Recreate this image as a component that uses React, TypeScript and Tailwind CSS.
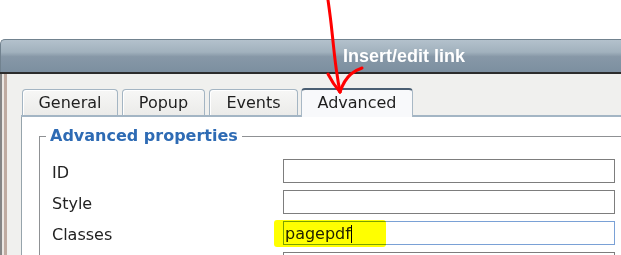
export default function App() {
  const rows = [
    { label: "ID", value: "", focused: false },
    { label: "Style", value: "", focused: false },
    { label: "Classes", value: "pagepdf", focused: true },
    { label: "", value: "", focused: false },
  ];
  return (
    <div className="relative w-[621px] h-[255px] overflow-hidden bg-white font-['DejaVu_Sans',sans-serif]">
      <div className="h-[39px]" />
      <div className="flex flex-col">
        <div className="h-[33px] rounded-tl-[5px] border-l border-t border-[#71828f] bg-[linear-gradient(to_bottom,#b3c1cc_0%,#a1b1bd_38%,#8798a7_52%,#7c8fa0_100%)] flex items-center">
          <span className="pl-[342px] pb-[1px] font-['Liberation_Sans',sans-serif] font-bold text-[18px] text-white leading-none">
            Insert/edit link
          </span>
        </div>
        <div className="h-[2px] bg-[#2c2c2c]" />
        <div className="flex h-[181px]">
          <div className="w-[2px] bg-[#858585]" />
          <div className="w-[2px] bg-[#ebe7e3]" />
          <div className="w-[3px] bg-[#bfaba1]" />
          <div className="flex-1 flex flex-col bg-[#f0f0ee] pt-[14px] pl-[14px]">
            <div className="flex items-end h-[29px] pl-[1px] border-b-2 border-[#a3b5c4] text-[16px] text-[#1e1e1e]">
              <div className="w-[96px] h-[26px] flex items-center justify-center rounded-t-[4px] border border-b-0 border-[#a4b5c3] bg-[linear-gradient(to_bottom,#f7f7f6,#ebebe9)] shadow-[inset_1px_1px_0_#ffffff]">
                General
              </div>
              <div className="ml-[4px] w-[83px] h-[26px] flex items-center justify-center rounded-t-[4px] border border-b-0 border-[#a4b5c3] bg-[linear-gradient(to_bottom,#f7f7f6,#ebebe9)] shadow-[inset_1px_1px_0_#ffffff]">
                Popup
              </div>
              <div className="ml-[4px] w-[89px] h-[26px] flex items-center justify-center rounded-t-[4px] border border-b-0 border-[#a4b5c3] bg-[linear-gradient(to_bottom,#f7f7f6,#ebebe9)] shadow-[inset_1px_1px_0_#ffffff]">
                Events
              </div>
              <div className="ml-[3px] -mb-[2px] w-[112px] h-[29px] flex items-center justify-center pb-[2px] rounded-t-[4px] border-x border-t-2 border-x-[#a8b8c5] border-t-[#4a5e72] bg-[#f8f9fb]">
                Advanced
              </div>
            </div>
            <div className="flex-1 bg-white border-l border-[#96a4ac]">
              <div className="ml-[17px] mt-[11px]">
                <div className="flex h-[16px]">
                  <div className="w-[7px] h-[8px] self-end border-t border-l border-[#8f9194]" />
                  <span className="px-[4px] leading-[16px] text-[16px] font-bold text-[#2e6bb4]">
                    Advanced properties
                  </span>
                  <div className="flex-1 h-[8px] self-end border-t border-[#8f9194]" />
                </div>
                <div className="border-l border-[#8f9194] pt-[15px] pl-[12px] flex flex-col gap-[7px]">
                  {rows.map((r, i) => (
                    <div key={i} className="flex items-center h-[24px]">
                      <div className="w-[231px] pt-[3px] text-[16px] text-[#222]">{r.label}</div>
                      <div
                        className={
                          r.focused
                            ? "w-[332px] h-[24px] border border-[#7aa1d6] bg-white flex items-center pl-[1px] pt-[1px] text-[16px] text-[#222]"
                            : "w-[332px] h-[24px] border border-[#7d7d7d] bg-white"
                        }
                      >
                        {r.focused && (
                          <>
                            <span>{r.value}</span>
                            <span className="w-[1px] h-[18px] bg-black" />
                          </>
                        )}
                      </div>
                    </div>
                  ))}
                </div>
              </div>
            </div>
          </div>
        </div>
      </div>
      <div className="absolute left-[274px] top-[220px] w-[112px] h-[27px] rounded-[3px] bg-[#ffff00] mix-blend-multiply" />
      <svg className="absolute inset-0 pointer-events-none" width="621" height="255" viewBox="0 0 621 255">
        <path
          d="M328,0 C330,14 331,22 332,32 C334,50 335,62 337,74 C338,82 339,87 340,92"
          fill="none"
          stroke="#ff0000"
          strokeWidth="3"
          strokeLinecap="round"
        />
        <path d="M328,74 Q333,84 340,92" fill="none" stroke="#ff0000" strokeWidth="3" strokeLinecap="round" />
        <path d="M340,92 Q344,80 351,74 Q356,70 362,68" fill="none" stroke="#ff0000" strokeWidth="3" strokeLinecap="round" />
      </svg>
    </div>
  );
}
